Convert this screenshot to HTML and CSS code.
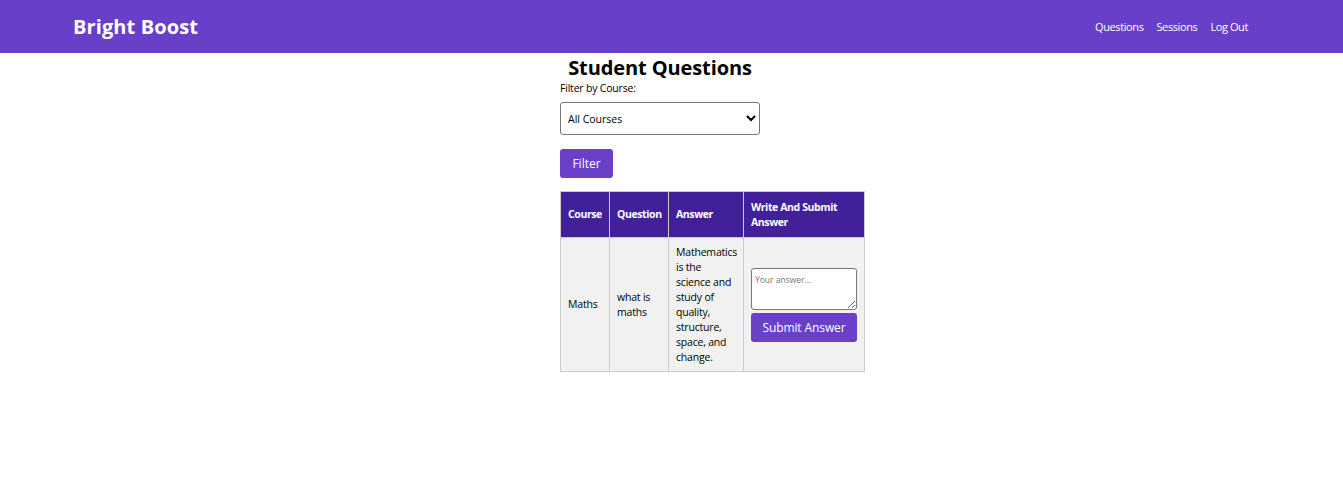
FILE: index.html
```html
<!DOCTYPE html>
<html>
<head>
<meta charset="utf-8">
<link rel="stylesheet" href="styles.css">
</head>
<body>
<header class="navbar">
  <div class="brand">Bright Boost</div>
  <nav class="nav-links">
    <a href="#">Questions</a>
    <a href="#">Sessions</a>
    <a href="#">Log Out</a>
  </nav>
</header>
<main class="content">
  <h2 class="title">Student Questions</h2>
  <form class="filter-form">
    <label class="filter-label" for="course">Filter by Course:</label>
    <select id="course" class="course-select">
      <option>All Courses</option>
    </select>
    <button type="button" class="btn filter-btn">Filter</button>
  </form>
  <table class="questions">
    <colgroup>
      <col class="c1"><col class="c2"><col class="c3"><col class="c4">
    </colgroup>
    <thead>
      <tr>
        <th>Course</th>
        <th>Question</th>
        <th>Answer</th>
        <th>Write And Submit Answer</th>
      </tr>
    </thead>
    <tbody>
      <tr>
        <td>Maths</td>
        <td>what is maths</td>
        <td>Mathematics is the science and study of quality, structure, space, and change.</td>
        <td>
          <div class="answer-box">
            <textarea class="answer-input" placeholder="Your answer..."></textarea>
            <button type="button" class="btn submit-btn">Submit Answer</button>
          </div>
        </td>
      </tr>
    </tbody>
  </table>
</main>
</body>
</html>
```

FILE: styles.css
```css
* { box-sizing: border-box; }
body {
  margin: 0;
  font-family: "Open Sans", "Noto Sans", sans-serif;
  color: #000;
  background: #fff;
}
.navbar {
  height: 53px;
  background: #673fc9;
  display: flex;
  align-items: center;
  justify-content: space-between;
  padding: 0 95px 0 73px;
}
.brand {
  color: #fff;
  font-weight: 700;
  font-size: 20px;
  letter-spacing: 0.1px;
}
.nav-links {
  display: flex;
  gap: 13px;
}
.nav-links a {
  color: #fff;
  text-decoration: none;
  font-size: 11px;
  letter-spacing: -0.4px;
}
.content {
  margin-left: 560px;
  width: 304px;
  display: flex;
  flex-direction: column;
  align-items: flex-start;
}
.title {
  width: 200px;
  text-align: center;
  margin: 2px 0 0;
  font-size: 20px;
  line-height: 26px;
  font-weight: 700;
  letter-spacing: -0.1px;
}
.filter-form {
  display: flex;
  flex-direction: column;
  align-items: flex-start;
}
.filter-label {
  font-size: 10.5px;
  line-height: 15px;
  letter-spacing: -0.2px;
}
.course-select {
  margin-top: 6px;
  width: 200px;
  height: 33px;
  font-family: inherit;
  font-size: 10.5px;
  padding: 0 3px;
  border: 1px solid #767676;
  border-radius: 3px;
  background: #fff;
  color: #000;
}
.btn {
  border: none;
  background: #6a40c9;
  color: #fff;
  border-radius: 3px;
  font-family: inherit;
  cursor: pointer;
}
.filter-btn {
  margin-top: 14px;
  width: 53px;
  height: 29px;
  font-size: 12px;
}
.questions {
  margin-top: 13px;
  border-collapse: collapse;
  width: 304px;
  table-layout: fixed;
  font-size: 10.5px;
  line-height: 15px;
}
.c1 { width: 49px; }
.c2 { width: 59px; }
.c3 { width: 75px; }
.c4 { width: 121px; }
.questions th {
  background: #41209a;
  color: #fff;
  font-weight: 700;
  text-align: left;
  padding: 7px 7px;
  height: 46px;
  border: 1px solid #cccccc;
  letter-spacing: -0.4px;
}
.questions td {
  background: #f1f1f1;
  padding: 6.5px 7px;
  border: 1px solid #cccccc;
  vertical-align: middle;
  letter-spacing: -0.2px;
}
.answer-box {
  display: flex;
  flex-direction: column;
  gap: 3px;
}
.answer-input {
  width: 106px;
  height: 42px;
  font-family: inherit;
  font-size: 8.5px;
  padding: 5px 3px;
  border: 1px solid #767676;
  border-radius: 3px;
  resize: both;
}
.submit-btn {
  width: 106px;
  height: 29px;
  font-size: 12px;
  letter-spacing: -0.1px;
}
```
